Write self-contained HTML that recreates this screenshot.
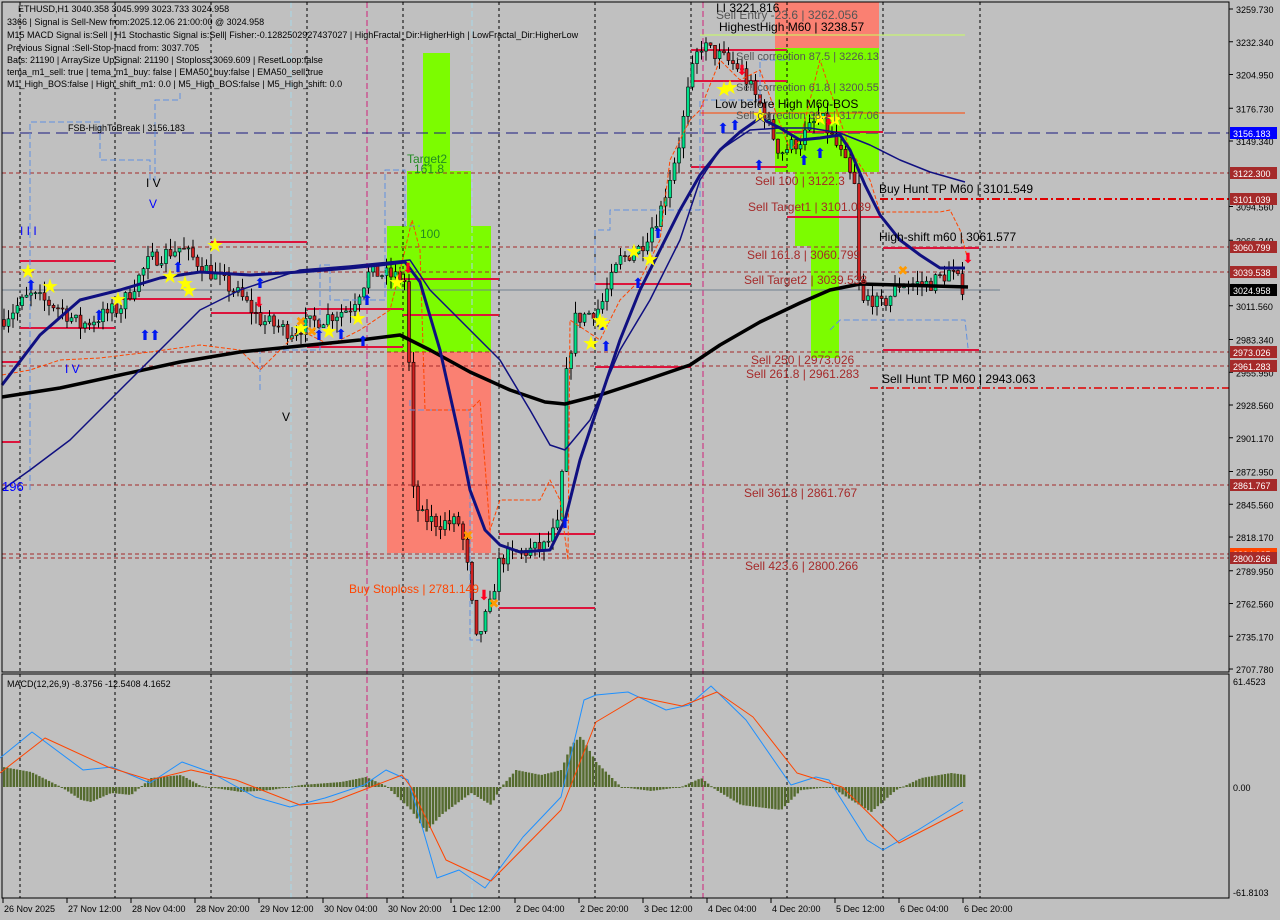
<!DOCTYPE html>
<html><head><meta charset="utf-8"><style>
html,body{margin:0;padding:0;background:#c0c0c0;}
body{width:1280px;height:920px;overflow:hidden;position:relative;font-family:"Liberation Sans","DejaVu Sans",sans-serif;}
svg{position:absolute;left:0;top:0;}
text{font-family:"Liberation Sans","DejaVu Sans",sans-serif;}
</style></head><body>
<svg id="s" width="1280" height="920" xmlns="http://www.w3.org/2000/svg">
<rect x="0" y="0" width="1280" height="920" fill="#c0c0c0"/>
<rect x="775" y="2" width="104" height="46" fill="#fa8072"/>
<rect x="775" y="48" width="104" height="124" fill="#7cfc00"/>
<rect x="795" y="172" width="44" height="74" fill="#7cfc00"/>
<rect x="811" y="246" width="28" height="112" fill="#7cfc00"/>
<rect x="423" y="53" width="27" height="118" fill="#7cfc00"/>
<rect x="407" y="171" width="64" height="55" fill="#7cfc00"/>
<rect x="387" y="226" width="104" height="126" fill="#7cfc00"/>
<rect x="387" y="352" width="104" height="201" fill="#fa8072"/>
<g id="grid"></g>
<g id="hl"></g>
<g id="cd"></g>
<g id="ln"></g>
<g id="lbl" font-size="12"></g>
</svg>
<script>
(function(){
var S=document.getElementById('s'),NS='http://www.w3.org/2000/svg';
function el(t,a,p){var e=document.createElementNS(NS,t);for(var k in a)e.setAttribute(k,a[k]);(p||S).appendChild(e);return e;}
function tx(x,y,s,c,sz,p,anch){var e=el('text',{x:x,y:y,fill:c,'font-size':sz||12},p||S);if(anch)e.setAttribute('text-anchor',anch);e.textContent=s;return e;}
var G=document.getElementById('grid'),H=document.getElementById('hl'),C=document.getElementById('cd'),L=document.getElementById('ln'),T=document.getElementById('lbl');
function Y(p){return 9+(3259.73-p)*1.1958;}
[20,115,211,307,403,499,595,691,787,883,980].forEach(function(x){el('line',{x1:x,y1:2,x2:x,y2:898,stroke:'#000','stroke-dasharray':'3,3','stroke-width':1},G);});
[367,703].forEach(function(x){el('line',{x1:x,y1:2,x2:x,y2:898,stroke:'#d0207a','stroke-dasharray':'6,3','stroke-width':1},G);});
[291,472].forEach(function(x){el('line',{x1:x,y1:2,x2:x,y2:898,stroke:'#a8d8e8','stroke-dasharray':'6,3','stroke-width':1},G);});
el('line',{x1:2,y1:133,x2:1229,y2:133,stroke:'#1a1a80','stroke-dasharray':'12,6','stroke-width':1},H);
[173,247,272,352,366,485,558,554].forEach(function(y){el('line',{x1:2,y1:y,x2:1229,y2:y,stroke:'#a52a2a','stroke-dasharray':'4,3','stroke-width':1},H);});
el('line',{x1:880,y1:199,x2:1229,y2:199,stroke:'#e00000','stroke-dasharray':'8,3,2,3','stroke-width':2},H);
el('line',{x1:870,y1:388,x2:1229,y2:388,stroke:'#e00000','stroke-dasharray':'8,3,2,3','stroke-width':1.5},H);
el('line',{x1:2,y1:290,x2:1000,y2:290,stroke:'#708090','stroke-width':1},H);
el('line',{x1:700,y1:35,x2:965,y2:35,stroke:'#c8ff60','stroke-width':1},H);
el('line',{x1:700,y1:113,x2:965,y2:113,stroke:'#ff4500','stroke-width':1},H);
[[20,115,261],[115,211,299],[20,115,328],[211,307,242],[211,307,313],[307,403,309],[403,499,279],[403,499,315],[307,403,347],[499,595,534],[499,595,608],[595,691,284],[595,691,367],[691,787,81],[691,787,167],[787,883,132],[787,883,217],[883,979,248],[883,979,350],[2,20,362],[2,20,442],[691,787,50]].forEach(function(s){el('line',{x1:s[0],y1:s[2],x2:s[1],y2:s[2],stroke:'#dc143c','stroke-width':2},H);});
var seed=7;function rnd(){seed=(seed*16807)%2147483647;return seed/2147483647;}
var P=[[2,3000],[30,3020],[60,3010],[80,2995],[120,3010],[150,3050],[180,3060],[210,3040],[240,3020],[260,3000],[290,2990],[320,3000],[350,3010],[370,3040],[400,3035],[407,3030],[412,2860],[420,2835],[440,2830],[460,2830],[468,2790],[476,2730],[490,2760],[500,2800],[520,2805],[545,2810],[560,2830],[566,2950],[575,3000],[600,3010],[620,3050],[640,3060],[660,3090],[680,3150],[690,3200],[700,3230],[720,3220],[740,3210],[760,3180],[780,3140],[800,3150],[820,3170],[840,3140],[855,3110],[860,3010],[870,3020],[880,3010],[900,3030],[930,3030],[950,3040],[965,3025]];
function interp(A,x){for(var i=0;i<A.length-1;i++){if(x>=A[i][0]&&x<=A[i+1][0]){var t=(x-A[i][0])/(A[i+1][0]-A[i][0]);return A[i][1]+t*(A[i+1][1]-A[i][1]);}}return A[A.length-1][1];}
var prev=interp(P,2);
for(var x=4;x<=966;x+=4.5){var c=interp(P,x)+(rnd()-0.5)*14;var o=prev;var hh=Math.max(o,c)+rnd()*10,ll=Math.min(o,c)-rnd()*10;
el('line',{x1:x,y1:Y(hh),x2:x,y2:Y(ll),stroke:'#000','stroke-width':1},C);
var ty=Y(Math.max(o,c)),h=Math.max(1,Math.abs(Y(o)-Y(c)));
el('rect',{x:x-1.5,y:ty,width:3,height:h,fill:c>=o?'#00e08a':'#d02020',stroke:'#000','stroke-width':0.6},C);prev=c;}
function pl(pts,col,w,dash,par){var a={points:pts,fill:'none',stroke:col,'stroke-width':w,'stroke-linejoin':'round'};if(dash)a['stroke-dasharray']=dash;el('polyline',a,par||L);}
pl('30,490 30,122 100,122 100,160 150,160 150,180 155,180 155,100 180,100 180,90','#5f8fe0',1,'6,3');
pl('260,390 260,350 320,350 320,265 330,265 330,300 385,300 385,170 405,170 405,226 420,226','#5f8fe0',1,'6,3');
pl('410,400 410,410 470,410 470,640 480,640','#5f8fe0',1,'6,3');
pl('595,290 595,230 610,230 610,210 700,210 700,100 760,100 760,60 790,60','#5f8fe0',1,'6,3');
pl('830,330 840,320 965,320 968,348','#5f8fe0',1,'6,3');
pl('2,375 30,370 60,360 100,358 150,352 200,345 240,350 260,370 300,330 330,345 360,330 390,310 405,250 412,220 420,250 425,410 470,410 480,400 490,530 500,500 540,500 550,480 560,500 568,560 570,320 600,340 620,300 640,280 660,240 670,160 690,120 700,110 720,60 740,80 760,70 790,150 800,140 820,60 840,120 850,150 870,180 880,212 940,212 950,210 960,230 968,260','#ff4500',1,'4,2');
pl('2,397 60,388 120,375 180,362 240,352 300,346 360,340 400,335 430,350 470,372 510,390 545,402 565,404 600,395 640,382 690,365 720,345 760,322 800,303 830,290 860,284 900,285 968,287','#000',3.5);
pl('2,385 40,335 80,300 120,290 160,278 200,272 250,275 300,272 350,268 380,265 405,262 420,282 440,350 460,440 470,490 485,530 500,545 520,552 550,550 565,520 580,460 600,400 620,340 640,290 660,250 680,210 700,175 720,150 740,132 760,118 780,128 800,140 820,138 840,135 850,150 865,185 880,215 900,240 920,255 940,268 965,268','#101080',3);
pl('2,490 30,470 70,440 110,400 160,350 200,310 240,290 270,280 300,270 350,266 390,262 410,260 430,290 470,330 500,360 530,410 550,445 565,450 590,420 620,350 650,300 680,240 700,180 720,150 750,130 780,128 810,128 840,133 870,145 900,160 930,172 965,182','#101080',1.5);
function up(x,y){tx(x,y,'⬆','#0018f0',14,L,'middle');}
function dn(x,y){tx(x,y,'⬇','#ff0020',14,L,'middle');}
function star(x,y){tx(x,y,'★','#ffff00',20,L,'middle');}
[[31,290],[99,320],[155,340],[178,272],[145,340],[260,288],[367,305],[363,346],[319,340],[341,339],[602,330],[606,351],[638,288],[658,238],[565,528],[723,133],[735,130],[759,170],[804,165],[820,158]].forEach(function(a){up(a[0],a[1]);});
[[259,307],[408,273],[484,600],[742,75],[829,125],[968,263]].forEach(function(a){dn(a[0],a[1]);});
[[28,278],[50,293],[118,306],[170,283],[189,297],[185,290],[215,252],[301,335],[329,338],[358,325],[397,289],[591,350],[603,330],[634,258],[650,266],[724,96],[730,94],[760,122],[820,125],[835,126],[600,327]].forEach(function(a){star(a[0],a[1]);});
[[301,326],[312,336],[468,540],[494,608],[903,275]].forEach(function(a){tx(a[0],a[1],'✖','#ff9a00',13,L,'middle');});
var lbl=[[18,12,'ETHUSD,H1  3040.358 3045.999 3023.733 3024.958','#000',9],[7,25,'3366 | Signal is Sell-New from:2025.12.06 21:00:00 @ 3024.958','#000',9],[7,38,'M15 MACD Signal is:Sell | H1 Stochastic Signal is:Sell| Fisher:-0.1282502927437027 | HighFractal_Dir:HigherHigh | LowFractal_Dir:HigherLow','#000',9],[7,51,'Previous Signal :Sell-Stop-macd from: 3037.705','#000',9],[7,63,'Bats: 21190 | ArraySize UpSignal: 21190 | Stoploss:3069.609 | ResetLoop:false','#000',9],[7,75,'tema_m1_sell: true | tema_m1_buy: false | EMA50_buy:false | EMA50_sell:true','#000',9],[7,87,'M1_High_BOS:false | High_shift_m1: 0.0 | M5_High_BOS:false | M5_High_shift: 0.0','#000',9],
[68,131,'FSB-HighToBreak | 3156.183','#000',9],[716,19,'Sell Entry -23.6 | 3262.056','#555',12],[719,31,'HighestHigh   M60 | 3238.57','#000',12],[736,60,'Sell correction 87.5 | 3226.13','#555',11],[736,91,'Sell correction 61.8 | 3200.55','#555',11],[715,108,'Low before High   M60-BOS','#000',12],[736,119,'Sell correction 38.2 | 3177.06','#555',11],[755,185,'Sell 100 | 3122.3','#a52a2a',12],[748,211,'Sell Target1 | 3101.039','#a52a2a',12],[879,193,'Buy Hunt TP M60 | 3101.549','#000',12],[879,241,'High-shift m60 | 3061.577','#000',12],[747,259,'Sell 161.8 | 3060.799','#a52a2a',12],[744,284,'Sell Target2 | 3039.538','#a52a2a',12],[751,364,'Sell  250 | 2973.026','#a52a2a',12],[746,378,'Sell  261.8 | 2961.283','#a52a2a',12],[882,383,'Sell Hunt TP M60 | 2943.063','#000',12],[744,497,'Sell  361.8 | 2861.767','#a52a2a',12],[745,570,'Sell  423.6 | 2800.266','#a52a2a',12],[349,593,'Buy Stoploss | 2781.149','#ff4500',12],[407,163,'Target2','#228b22',12],[414,173,'161.8','#228b22',12],[420,238,'100','#228b22',12],[146,187,'I V','#000',12],[149,208,'V','#0000ff',12],[20,235,'I I I','#0000ff',12],[65,373,'I V','#0000ff',12],[282,421,'V','#000',12],[2,491,'196','#0000ff',13],[716,12,'I I  3221.816','#000',12]];
lbl.forEach(function(a){tx(a[0],a[1],a[2],a[3],a[4],T);});
el('rect',{x:1229,y:0,width:51,height:920,fill:'#c0c0c0'});
el('rect',{x:2,y:2,width:1227,height:670,fill:'none',stroke:'#000','stroke-width':1});
el('rect',{x:2,y:674,width:1227,height:224,fill:'none',stroke:'#000','stroke-width':1});
[[3259.73,'3259.730'],[3232.34,'3232.340'],[3204.95,'3204.950'],[3176.73,'3176.730'],[3149.34,'3149.340'],[3094.56,'3094.560'],[3066.34,'3066.340'],[3011.56,'3011.560'],[2983.34,'2983.340'],[2955.95,'2955.950'],[2928.56,'2928.560'],[2901.17,'2901.170'],[2872.95,'2872.950'],[2845.56,'2845.560'],[2818.17,'2818.170'],[2789.95,'2789.950'],[2762.56,'2762.560'],[2735.17,'2735.170'],[2707.78,'2707.780']].forEach(function(a){var y=Y(a[0]);el('line',{x1:1229,y1:y,x2:1233,y2:y,stroke:'#000'});tx(1236,y+4,a[1],'#000',9);});
[[133,'3156.183','#0000ff'],[173,'3122.300','#a52a2a'],[199,'3101.039','#a52a2a'],[247,'3060.799','#a52a2a'],[272,'3039.538','#a52a2a'],[290,'3024.958','#000'],[352,'2973.026','#a52a2a'],[366,'2961.283','#a52a2a'],[485,'2861.767','#a52a2a'],[554,'2804.185','#ff4500'],[558,'2800.266','#a52a2a']].forEach(function(a){el('rect',{x:1230,y:a[0]-6,width:47,height:12,fill:a[2]});tx(1233,a[0]+4,a[1],'#fff',9);});
tx(1233,685,'61.4523','#000',9);tx(1233,791,'0.00','#000',9);tx(1233,896,'-61.8103','#000',9);
var HP=[[2,767],[30,772],[60,787],[80,800],[90,802],[110,793],[130,795],[150,778],[180,775],[200,786],[240,792],[270,790],[300,785],[340,782],[365,777],[385,786],[410,810],[425,832],[440,815],[470,793],[490,805],[500,787],[515,770],[540,775],[560,770],[570,745],[580,736],[595,762],[620,787],[650,791],[680,787],[700,778],[715,790],[740,805],[780,810],[800,790],[830,787],[850,800],[870,812],[895,790],[920,778],[950,773],[965,775]];
for(var x2=3;x2<=966;x2+=3.2){var yy=interp(HP,x2);el('rect',{x:x2,y:Math.min(yy,787),width:2.4,height:Math.max(1,Math.abs(yy-787)),fill:'#556b2f'});}
pl('0,758 32,732 83,770 112,767 150,783 182,762 210,772 255,797 290,807 325,798 364,785 386,770 408,780 421,823 437,878 459,870 485,888 523,837 561,797 584,700 596,695 628,692 666,710 689,705 711,686 746,720 791,785 816,777 829,780 867,840 883,850 918,830 963,802','#1e90ff',1,null,S);
pl('0,773 45,738 108,767 150,780 191,770 236,780 300,805 332,802 402,775 411,787 446,860 491,881 561,810 596,722 638,697 682,706 717,692 753,717 797,773 842,787 899,843 963,810','#ff4500',1,null,S);
tx(7,687,'MACD(12,26,9) -8.3756 -12.5408 4.1652','#000',9);
[['26 Nov 2025',2],['27 Nov 12:00',66],['28 Nov 04:00',130],['28 Nov 20:00',194],['29 Nov 12:00',258],['30 Nov 04:00',322],['30 Nov 20:00',386],['1 Dec 12:00',450],['2 Dec 04:00',514],['2 Dec 20:00',578],['3 Dec 12:00',642],['4 Dec 04:00',706],['4 Dec 20:00',770],['5 Dec 12:00',834],['6 Dec 04:00',898],['6 Dec 20:00',962]].forEach(function(a){el('line',{x1:a[1]+1,y1:898,x2:a[1]+1,y2:903,stroke:'#000'});tx(a[1]+2,912,a[0],'#000',9);});
})();
</script>
</body></html>
